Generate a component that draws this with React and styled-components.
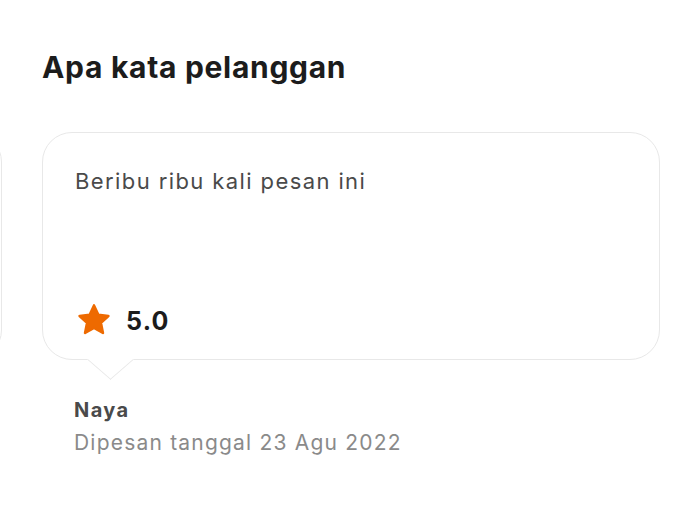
import styled, { createGlobalStyle } from "styled-components";

const GlobalStyle = createGlobalStyle`
  * { box-sizing: border-box; }
  body {
    margin: 0;
    background: #ffffff;
    font-family: Inter, "Liberation Sans", sans-serif;
  }
`;

const review = {
  text: "Beribu ribu kali pesan ini",
  rating: "5.0",
  name: "Naya",
  date: "23 Agu 2022",
};

function Star() {
  return (
    <svg width="38" height="38" viewBox="0 0 24 24">
      <path
        d="M12 2.8l2.75 5.9 6.35.75-4.7 4.4 1.25 6.35L12 17.05 6.35 20.2 7.6 13.85 2.9 9.45l6.35-.75z"
        fill="#ee6a00"
        stroke="#ee6a00"
        strokeWidth="1.6"
        strokeLinejoin="round"
      />
    </svg>
  );
}

function App() {
  return (
    <>
      <GlobalStyle />
      <Section>
        <Heading>Apa kata pelanggan</Heading>
        <Viewport>
          <Track>
            <Slide>
              <Bubble />
            </Slide>
            <Slide>
              <Bubble $tail>
                <Quote>{review.text}</Quote>
                <Rating>
                  <Star />
                  <Score>{review.rating}</Score>
                </Rating>
              </Bubble>
              <Author>
                <Name>{review.name}</Name>
                <Ordered>Dipesan tanggal {review.date}</Ordered>
              </Author>
            </Slide>
          </Track>
        </Viewport>
      </Section>
    </>
  );
}

/* ---------------- Styled Components ---------------- */

const Section = styled.section`
  width: 696px;
  height: 522px;
  padding-top: 47px;
  overflow: hidden;
`;

const Heading = styled.h2`
  margin: 0 0 0 42px;
  font-size: 30px;
  line-height: 40px;
  font-weight: 700;
  color: #1c1c1c;
  letter-spacing: 0.7px;
`;

const Viewport = styled.div`
  margin-top: 45px;
  overflow: hidden;
`;

const Track = styled.div`
  display: flex;
  gap: 40px;
  margin-left: -616px;
`;

const Slide = styled.div`
  flex: 0 0 618px;
`;

const Bubble = styled.div`
  position: relative;
  height: 228px;
  border: 1.5px solid #e8e8e8;
  border-radius: 30px;
  padding: 34px 32px 20px 32px;
  display: flex;
  flex-direction: column;
  justify-content: space-between;
  background: #fff;

  &::after {
    content: "";
    display: ${(p) => (p.$tail ? "block" : "none")};
    position: absolute;
    left: 50.5px;
    bottom: -16.5px;
    width: 32px;
    height: 32px;
    background: #fff;
    border-right: 1.5px solid #e8e8e8;
    border-bottom: 1.5px solid #e8e8e8;
    transform: scaleY(0.87) rotate(45deg);
  }
`;

const Quote = styled.p`
  margin: 0;
  font-size: 22px;
  line-height: 28px;
  color: #4a4a4a;
  letter-spacing: 1.4px;
`;

const Rating = styled.div`
  display: flex;
  align-items: center;
  gap: 13px;
`;

const Score = styled.span`
  font-size: 25px;
  font-weight: 700;
  color: #1c1c1c;
  letter-spacing: 1.3px;
  padding-top: 1px;
`;

const Author = styled.div`
  padding: 37px 0 0 32px;
`;

const Name = styled.div`
  font-size: 20px;
  line-height: 26px;
  font-weight: 700;
  color: #4a4a4a;
  letter-spacing: 1.4px;
`;

const Ordered = styled.div`
  margin-top: 6px;
  font-size: 21px;
  line-height: 28px;
  color: #8a8a8a;
  letter-spacing: 1.2px;
`;

export default App;
